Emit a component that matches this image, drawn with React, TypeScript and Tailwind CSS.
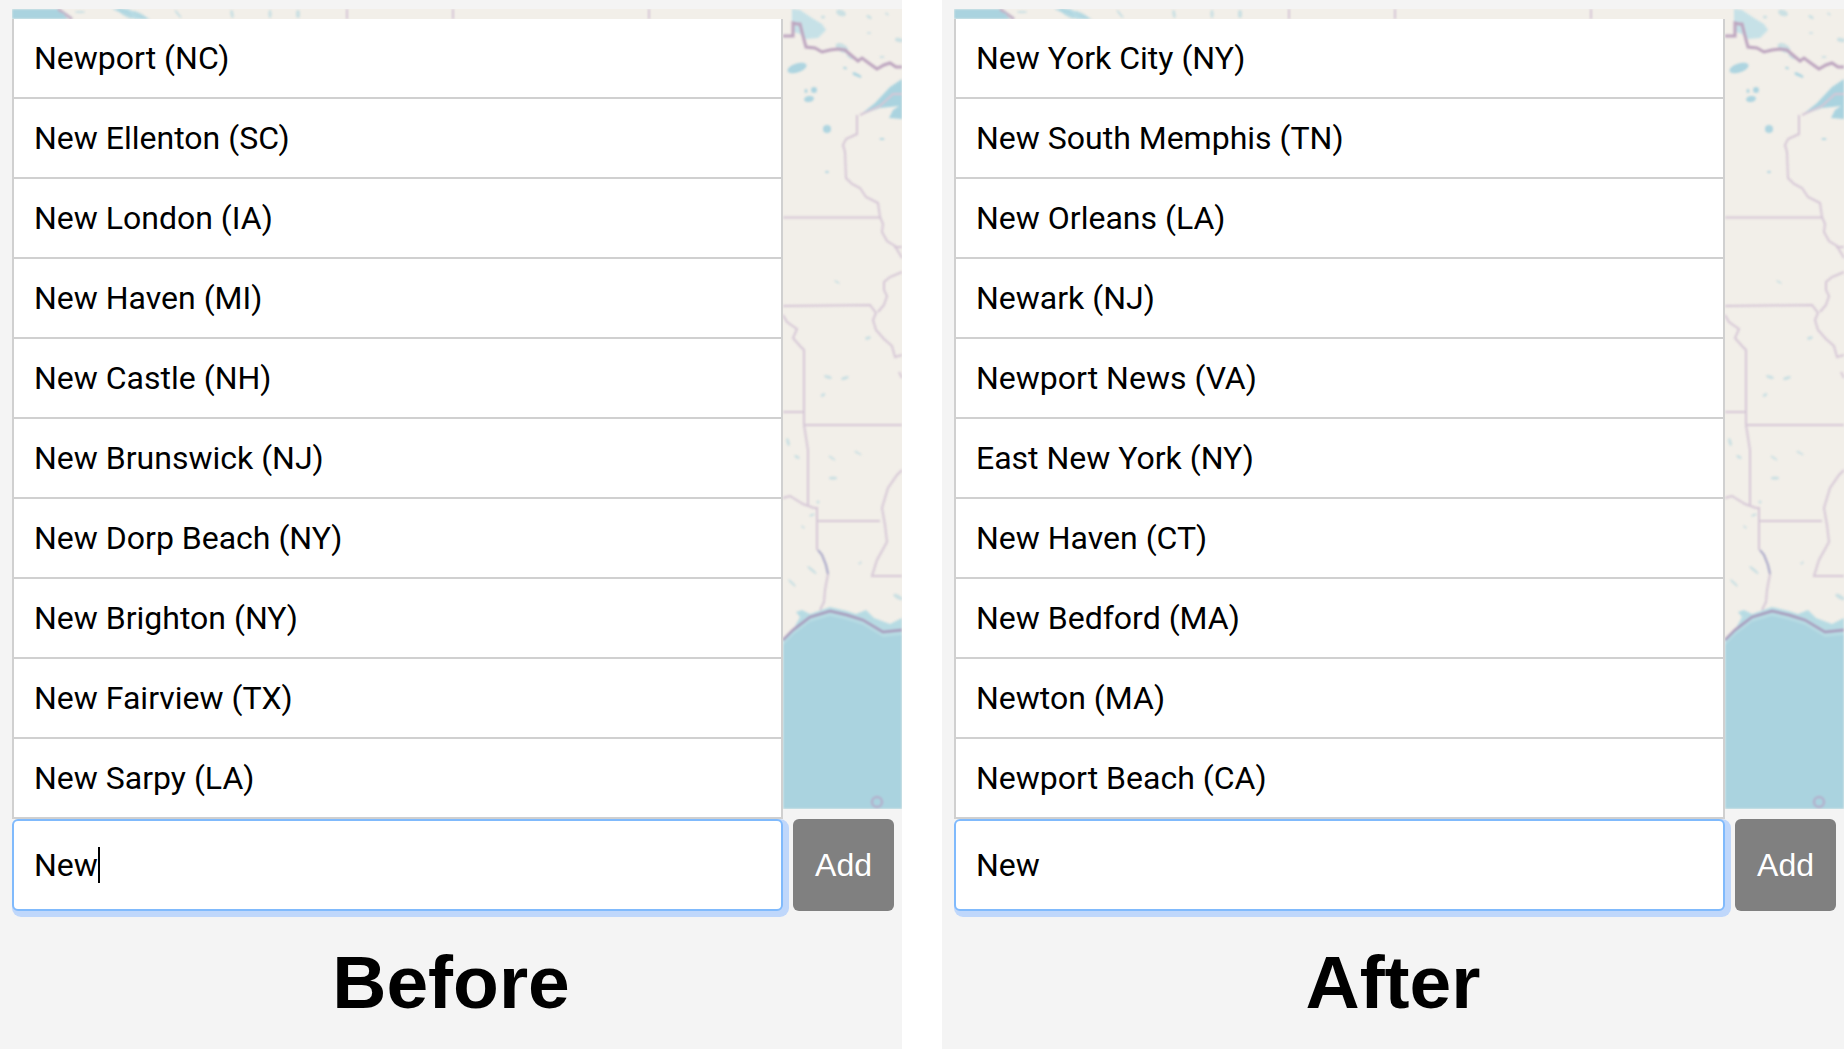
const beforeCities = [
  'Newport (NC)',
  'New Ellenton (SC)',
  'New London (IA)',
  'New Haven (MI)',
  'New Castle (NH)',
  'New Brunswick (NJ)',
  'New Dorp Beach (NY)',
  'New Brighton (NY)',
  'New Fairview (TX)',
  'New Sarpy (LA)',
];

const afterCities = [
  'New York City (NY)',
  'New South Memphis (TN)',
  'New Orleans (LA)',
  'Newark (NJ)',
  'Newport News (VA)',
  'East New York (NY)',
  'New Haven (CT)',
  'New Bedford (MA)',
  'Newton (MA)',
  'Newport Beach (CA)',
];

// cx, cy, rx, ry, rotation
const lakes: [number, number, number, number, number][] = [
  [797, 68, 10, 4.5, -18], [814, 90, 3, 3, 0], [809, 99, 5, 3, -10], [806, 91, 1.5, 2, 0],
  [827, 129, 4, 4, 0], [857, 75, 5, 1.5, 25], [845, 68, 2, 1, 20], [882, 139, 2.5, 1, 0],
  [827, 172, 2, 1, 0], [837, 282, 3, 1, 30], [868, 338, 3, 1.5, -20], [828, 377, 4, 1.5, 20],
  [845, 378, 4, 1.5, -20], [823, 395, 2.5, 1.5, -30], [788, 442, 1.5, 4, -15], [797, 457, 3, 1.5, 30],
  [832, 458, 4, 1, 35], [858, 453, 4, 1, 30], [833, 478, 4, 1.5, 0], [818, 502, 1.5, 1.5, 0],
  [812, 515, 3, 1, -20], [803, 527, 2, 1, 40], [812, 570, 6, 1.2, 40], [792, 583, 5, 1.2, 45],
  [860, 563, 2, 1, -40], [898, 597, 5, 2, 30], [841, 13, 5, 3, 20], [823, 17, 2, 1.5, 0],
  [869, 17, 3, 1.5, 30], [869, 33, 2, 1, 0], [899, 40, 4, 2, 10], [882, 57, 2.5, 1, 0],
  [887, 14, 2, 1, 30], [842, 48, 7, 4, 30], [850, 56, 4, 2, 40], [62, 14, 3, 1.5, 0],
  [125, 13, 9, 3, 35], [140, 15, 8, 2, 30], [80, 12, 5, 1, 0], [178, 14, 5, 1, 50],
  [232, 14, 1.5, 4, -10], [270, 14, 1.5, 4, 0], [298, 14, 2, 4, 0],
];

const borders = [
  'M783 217.5H880',
  'M857 115V134L846 139L843 145L845 152L846 178L852 184L860 188L866 197L878 203L880 217L883 224L882 232L887 241L895 246L902 258',
  'M860 115L880 106L893 94H902',
  'M894 247H902',
  'M902 272L890 277L884 282L884 290L887 296L884 305L878 312',
  'M783 306L870 305L876 313L873 320L876 330L884 339L892 346L895 357L902 355',
  'M899 372L902 378',
  'M783 315L787 322L797 329L793 338L800 346L804 350V425L808 450V505',
  'M783 412H804',
  'M804 425H902',
  'M783 498L790 496L803 504L814 508H817V550',
  'M818 521H880',
  'M902 470L897 475L888 488L882 508L885 525L887 542L877 560L872 576H902',
  'M828 574L825 590L824 602L820 610',
  'M453 9V19',
  'M649 9V19',
  'M347 9V19',
];

function UsMap() {
  return (
    <svg viewBox="12 9 890 800" className="block w-[890px] h-[800px] [grid-area:1/1]">
      <rect x="12" y="9" width="890" height="800" fill="#f2efe9" />
      <g className="blur-[0.8px]">
        <path d="M12 9H58L68 19H12Z" fill="#aad3df" />
        <path d="M58 9L72 19" stroke="#c4b4c8" strokeWidth="3" fill="none" />
        <path d="M112 9L128 9L150 19H135Z" fill="#b8dbe4" />
        <path d="M792 9L800 10L812 18L822 24L826 30L818 38L806 39L800 34L794 32L792 22Z" fill="#c6e1e7" />
        <path d="M860 115L875 103L890 87L902 79V119L889 118L893 110L899 106L880 108Z" fill="#aad3df" />
        <path
          d="M783 640L793 630L800 617L796 612L802 610L810 614L830 607L847 611L856 614L866 610L874 618L890 624L902 618V809H783Z"
          fill="#b7dbe3"
        />
        <path d="M783 645L793 635L810 622L830 616L847 620L863 625L883 637L902 635V809H783Z" fill="#aad3df" />
        <path d="M783 640L793 630L810 617L830 611L847 615L863 620L883 632L902 630" stroke="#a899bb" strokeWidth="2.4" fill="none" />
        {lakes.map(([cx, cy, rx, ry, rot]) => (
          <ellipse
            key={`${cx}-${cy}`}
            cx={cx}
            cy={cy}
            rx={rx}
            ry={ry}
            fill="#aad3df"
            fillOpacity={cy > 250 || cy < 60 ? 0.55 : 0.95}
            transform={`rotate(${rot} ${cx} ${cy})`}
          />
        ))}
        {borders.map(d => (
          <path key={d} d={d} stroke="#d6c7d6" strokeWidth="2" fill="none" />
        ))}
        <path
          d="M783 36H793V23L797 24L800 24L803 36L806 47L815 48L822 52L830 50L838 49L845 50L852 56L858 61L862 58L870 64L877 69L884 65L890 63L896 67H902"
          stroke="#bda5bf"
          strokeWidth="3"
          fill="none"
        />
        <path d="M818 550L822 555L826 565L828 574" stroke="#a5a3c6" strokeWidth="2" fill="none" />
        <circle cx="877" cy="802" r="5" stroke="#b5a9c8" strokeWidth="2" fill="none" />
      </g>
    </svg>
  );
}

function Panel({ cities, label, caret }: { cities: string[]; label: string; caret?: boolean }) {
  return (
    <div className="w-[902px] h-[1049px] bg-[#f4f4f4] pt-[9px] pl-[12px]">
      <div className="grid">
        <UsMap />
        <ul className="[grid-area:1/1] mt-[10px] w-[771px] bg-white border-x-2 border-[#d0d0d0]">
          {cities.map(city => (
            <li key={city} className="h-[80px] flex items-center pl-[20px] border-b-2 border-[#d0d0d0] font-['Roboto',sans-serif] text-[32px] text-black">
              {city}
            </li>
          ))}
        </ul>
      </div>
      <div className="flex gap-[10px]">
        <div className="w-[771px] h-[92px] flex items-center pl-[20px] bg-white border-2 border-[#80bafc] rounded-[6px] shadow-[3px_3px_0_3px_#bfd7fb] font-['Roboto',sans-serif] text-[32px] text-black">
          New
          {caret && <span className="w-[2px] h-[36px] bg-black" />}
        </div>
        <button className="w-[101px] h-[92px] bg-[#808080] rounded-[6px] text-white text-[32px]">Add</button>
      </div>
      <div className="w-[902px] -ml-[12px] mt-[34px] text-center text-[75px] leading-none font-bold text-black">{label}</div>
    </div>
  );
}

export default function App() {
  return (
    <div className="w-full h-[1052px] bg-white flex justify-between font-['Liberation_Sans',Arial,sans-serif]">
      <Panel cities={beforeCities} label="Before" caret />
      <Panel cities={afterCities} label="After" />
    </div>
  );
}
